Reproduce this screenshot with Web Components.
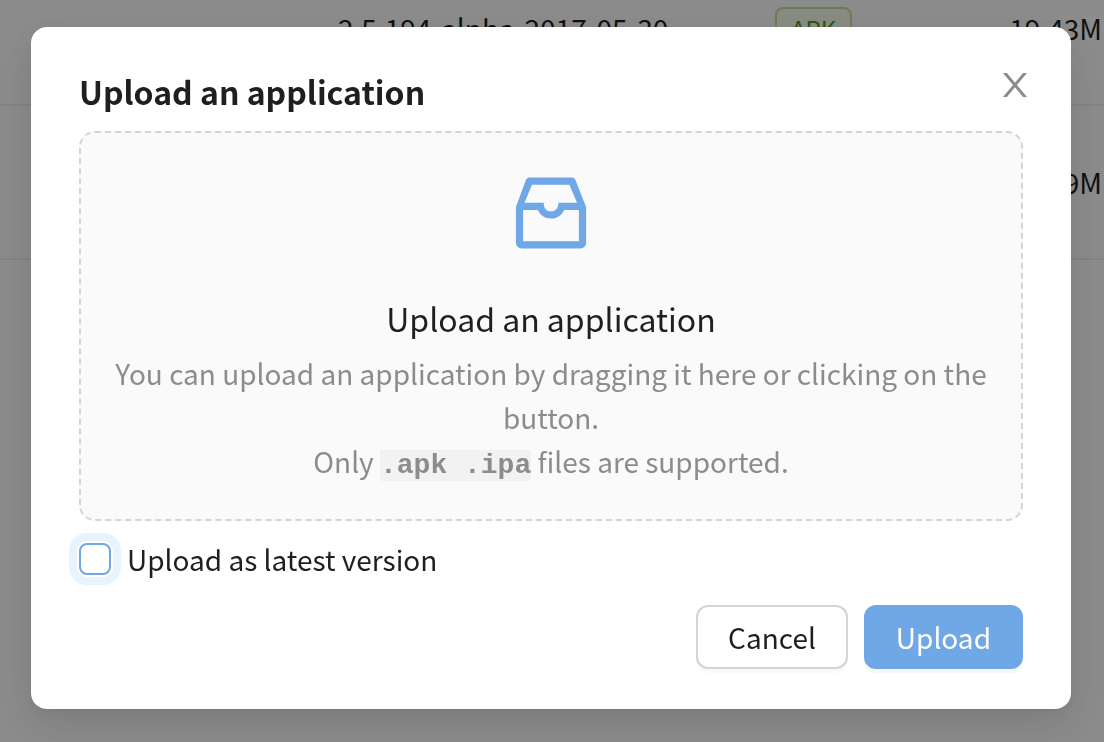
<!DOCTYPE html>
<html lang="en">
<head>
<meta charset="utf-8">
<meta name="viewport" content="width=device-width, initial-scale=1">
<title>Upload an application</title>
<style>
  html, body { margin: 0; height: 100%; overflow: hidden; background: #fff; }
  body { font-family: "Noto Sans CJK SC", "Noto Sans", sans-serif; font-size: 28px; line-height: 44px; color: #1f1f1f; }
</style>
</head>
<body>
<version-table></version-table>
<modal-dialog heading="Upload an application">
  <upload-dropzone heading="Upload an application"></upload-dropzone>
  <check-field>Upload as latest version</check-field>
  <action-button slot="footer">Cancel</action-button>
  <action-button slot="footer" variant="primary">Upload</action-button>
</modal-dialog>
<script>
class BaseElement extends HTMLElement {
  connectedCallback() {
    if (!this.shadowRoot) this.attachShadow({ mode: 'open' }).innerHTML = this.render();
  }
}

class StatusTag extends BaseElement {
  render() {
    return `<style>
      :host { display: inline-block; box-sizing: border-box; padding: 0 14px; border: 2px solid #c0e896; border-radius: 8px; background: #f7ffee; color: #4c9b21; font-size: 24px; line-height: 40px; }
    </style><slot></slot>`;
  }
}

class VersionTable extends BaseElement {
  render() {
    return `<style>
      :host { display: block; height: 100%; overflow: hidden; }
      table { width: 100%; margin-top: -48px; border-collapse: separate; border-spacing: 0; table-layout: fixed; }
      td { box-sizing: border-box; height: 154px; padding: 0; border-bottom: 2px solid #f0f0f0; vertical-align: middle; white-space: nowrap; }
      .lead { width: 338px; }
      .type { width: 132px; }
      .size { width: 197px; padding-right: 2px; text-align: right; }
    </style>
    <table>
      <tbody>
        <tr><td class="lead"></td><td>2.5.194-alpha-2017-05-30</td><td class="type"><status-tag>APK</status-tag></td><td class="size">19.43M</td></tr>
        <tr><td></td><td></td><td></td><td class="size">9M</td></tr>
      </tbody>
    </table>`;
  }
}

class ModalDialog extends BaseElement {
  render() {
    return `<style>
      :host { position: fixed; inset: 0; box-sizing: border-box; padding: 27px 33px 27px 31px; background: rgba(0, 0, 0, .45); }
      section { position: relative; display: flex; flex-direction: column; box-sizing: border-box; padding: 40px 48px; border-radius: 16px; background: #fff;
        box-shadow: 0 12px 32px rgba(0, 0, 0, .08), 0 6px 12px -8px rgba(0, 0, 0, .12), 0 18px 56px 16px rgba(0, 0, 0, .05); }
      h2 { margin: 0 0 16px; font-size: 32px; line-height: 48px; font-weight: 700; }
      footer { display: flex; justify-content: flex-end; gap: 16px; margin-top: 24px; }
      .close { position: absolute; top: 36px; right: 34px; display: grid; place-items: center; width: 44px; height: 44px; padding: 0; border: 0; background: none; color: #8c8c8c; }
      .close svg { width: 38px; height: 38px; fill: currentColor; }
    </style>
    <section role="dialog" aria-modal="true" aria-labelledby="title">
      <h2 id="title">${this.getAttribute('heading')}</h2>
      <button class="close" type="button" aria-label="Close"><svg viewBox="0 0 1024 1024" aria-hidden="true"><path d="M563.8 512l262.5-312.9c4.4-5.2.7-13.1-6.1-13.1h-79.8c-4.7 0-9.2 2.1-12.3 5.7L511.6 449.8 295.1 191.7c-3-3.6-7.5-5.7-12.3-5.7H203c-6.8 0-10.5 7.9-6.1 13.1L459.4 512 196.9 824.9A7.95 7.95 0 0 0 203 838h79.8c4.7 0 9.2-2.1 12.3-5.7l216.5-258.1 216.5 258.1c3 3.6 7.5 5.7 12.3 5.7h79.8c6.8 0 10.5-7.9 6.1-13.1L563.8 512z"/></svg></button>
      <slot></slot>
      <footer><slot name="footer"></slot></footer>
    </section>`;
  }
}

class UploadDropzone extends BaseElement {
  render() {
    return `<style>
      :host { display: block; padding: 32px 32px 36px; border: 2px dashed #d4d4d4; border-radius: 16px; background: #fafafa; text-align: center; }
      svg { display: block; width: 96px; height: 96px; margin: 0 auto 32px; fill: #70a7e6; }
      h3 { margin: 0 0 8px; font-size: 32px; line-height: 50px; font-weight: 400; }
      p { margin: 0; color: #8c8c8c; }
      code { background: #f2f2f2; font: bold 28px/32px "Liberation Mono", monospace; }
    </style>
    <svg viewBox="0 0 1024 1024" aria-hidden="true"><path d="M885.2 446.3l-.2-.8-112.2-285.1c-5-16.1-19.9-27.2-36.8-27.2H281.2c-17 0-32.1 11.3-36.9 27.6L139.4 443l-.3.7-.2.8c-1.3 4.9-1.7 9.9-1 14.8-.1 1.6-.2 3.2-.2 4.8V830a60.9 60.9 0 0 0 60.8 60.8h627.2c33.5 0 60.8-27.3 60.9-60.8V464.1c0-1.3 0-2.6-.1-3.7.4-4.9 0-9.6-1.3-14.1zm-295.8-43l-.3 15.7c-.8 44.9-31.8 75.1-77.1 75.1-22.1 0-41.1-7.1-54.8-20.6S436 441.2 435.6 419l-.3-15.7H229.5L309 210h399.2l81.7 193.3H589.4zm-375 76.8h157.3c24.3 57.1 76 90.8 140.4 90.8 33.7 0 65-9.4 90.3-27.2 22.2-15.6 39.5-37.4 50.7-63.6h156.5V814H214.4V480.1z"/></svg>
    <h3>${this.getAttribute('heading')}</h3>
    <p>You can upload an application by dragging it here or clicking on the button.</p>
    <p>Only <code>.apk .ipa</code> files are supported.</p>`;
  }
}

class CheckField extends BaseElement {
  render() {
    return `<style>
      :host { display: block; margin-top: 16px; }
      label { display: flex; align-items: center; gap: 16px; width: fit-content; }
      input { appearance: none; box-sizing: border-box; width: 32px; height: 32px; margin: 0; border: 2px solid #70a7e6; border-radius: 8px; background: #fff; outline: 8px solid #e6f4ff; outline-offset: 2px; }
      input:checked { background: #70a7e6; }
    </style>
    <label><input type="checkbox"><span><slot></slot></span></label>`;
  }
}

class ActionButton extends BaseElement {
  render() {
    return `<style>
      :host { display: block; }
      button { display: block; box-sizing: border-box; height: 64px; padding: 0 30px; border: 2px solid #d4d4d4; border-radius: 12px; background: #fff; color: inherit; font: inherit; box-shadow: 0 4px 0 rgba(0, 0, 0, .02); }
      :host([variant="primary"]) button { border-color: #70a7e6; background: #70a7e6; color: #fff; box-shadow: 0 4px 0 rgba(5, 145, 255, .05); }
    </style>
    <button type="button"><slot></slot></button>`;
  }
}

customElements.define('status-tag', StatusTag);
customElements.define('version-table', VersionTable);
customElements.define('modal-dialog', ModalDialog);
customElements.define('upload-dropzone', UploadDropzone);
customElements.define('check-field', CheckField);
customElements.define('action-button', ActionButton);
</script>
</body>
</html>
